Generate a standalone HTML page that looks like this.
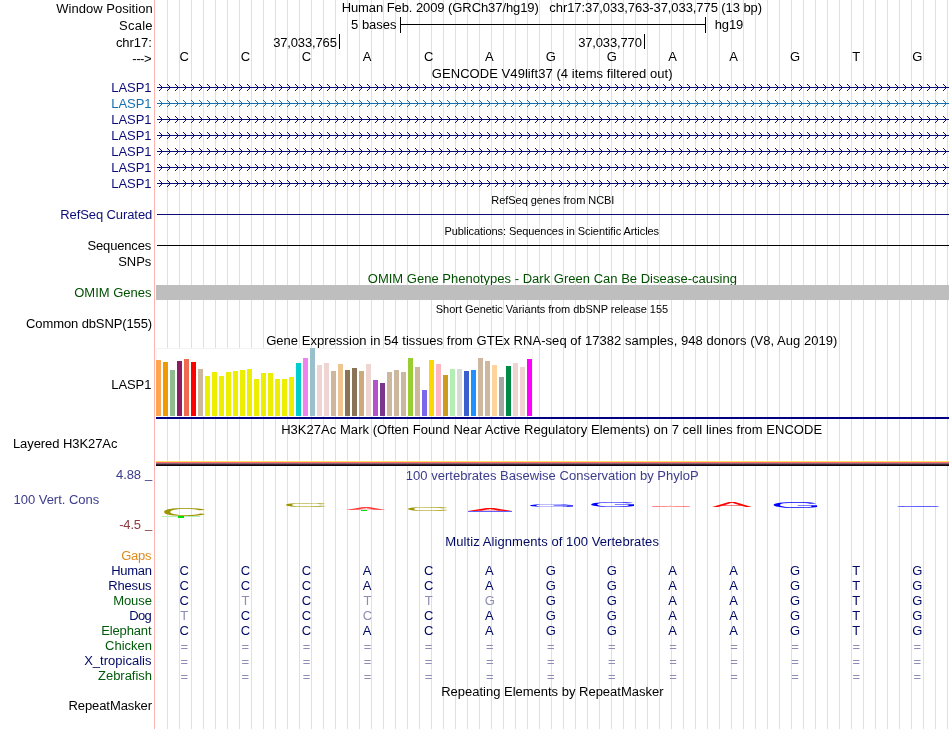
<!DOCTYPE html>
<html><head><meta charset="utf-8"><title>UCSC Genome Browser</title>
<style>
html,body{margin:0;padding:0;background:#fff;}
svg{display:block;will-change:transform;font-family:'Liberation Sans', sans-serif;}
rect{shape-rendering:crispEdges;}
</style></head><body>
<svg width="950" height="729" viewBox="0 0 950 729">
<rect x="0" y="0" width="950" height="729" fill="#fff"/>
<path d="M167.5 0V729M179.5 0V729M191.5 0V729M203.5 0V729M215.5 0V729M227.5 0V729M239.5 0V729M251.5 0V729M263.5 0V729M275.5 0V729M287.5 0V729M299.5 0V729M311.5 0V729M323.5 0V729M335.5 0V729M347.5 0V729M359.5 0V729M371.5 0V729M383.5 0V729M395.5 0V729M407.5 0V729M419.5 0V729M431.5 0V729M443.5 0V729M455.5 0V729M467.5 0V729M479.5 0V729M491.5 0V729M503.5 0V729M515.5 0V729M527.5 0V729M539.5 0V729M551.5 0V729M563.5 0V729M575.5 0V729M587.5 0V729M599.5 0V729M611.5 0V729M623.5 0V729M635.5 0V729M647.5 0V729M659.5 0V729M671.5 0V729M683.5 0V729M695.5 0V729M707.5 0V729M719.5 0V729M731.5 0V729M743.5 0V729M755.5 0V729M767.5 0V729M779.5 0V729M791.5 0V729M803.5 0V729M815.5 0V729M827.5 0V729M839.5 0V729M851.5 0V729M863.5 0V729M875.5 0V729M887.5 0V729M899.5 0V729M911.5 0V729M923.5 0V729M935.5 0V729M947.5 0V729" stroke="#dcdcff" stroke-width="1" fill="none" shape-rendering="crispEdges"/>
<rect x="154" y="0" width="1" height="729" fill="#ffb4b4"/>
<text transform="translate(56.28,13) scale(1,1.04)" fill="#000" font-size="13" letter-spacing="0.023" xml:space="preserve">Window Position</text>
<text transform="translate(118.97,29.6) scale(1,1.04)" fill="#000" font-size="13" letter-spacing="0.276" xml:space="preserve">Scale</text>
<text transform="translate(115.91,46.8) scale(1,1.04)" fill="#000" font-size="13" letter-spacing="-0.052" xml:space="preserve">chr17:</text>
<text transform="translate(132.29,62.6) scale(1,1.04)" fill="#000" font-size="13" letter-spacing="-0.454" xml:space="preserve">---&gt;</text>
<text transform="translate(341.66,12) scale(1,1.04)" fill="#000" font-size="13" letter-spacing="-0.074" xml:space="preserve">Human Feb. 2009 (GRCh37/hg19)   chr17:37,033,763-37,033,775 (13 bp)</text>
<text transform="translate(351.10,29) scale(1,1.04)" fill="#000" font-size="13" letter-spacing="-0.011" xml:space="preserve">5 bases</text>
<rect x="400" y="24" width="306" height="1" fill="#000"/>
<rect x="400" y="17" width="1" height="16" fill="#000"/>
<rect x="705" y="17" width="1" height="16" fill="#000"/>
<text transform="translate(714.80,29) scale(1,1.04)" fill="#000" font-size="13" letter-spacing="-0.153" xml:space="preserve">hg19</text>
<text transform="translate(273.13,47) scale(1,1.04)" fill="#000" font-size="13" letter-spacing="-0.134" xml:space="preserve">37,033,765</text>
<rect x="339" y="34" width="1" height="15" fill="#000"/>
<text transform="translate(578.13,47) scale(1,1.04)" fill="#000" font-size="13" letter-spacing="-0.138" xml:space="preserve">37,033,770</text>
<rect x="644" y="34" width="1" height="15" fill="#000"/>
<text transform="translate(184.30,60.8) scale(1,1.04)" text-anchor="middle" fill="#000" font-size="13">C</text>
<text transform="translate(245.38,60.8) scale(1,1.04)" text-anchor="middle" fill="#000" font-size="13">C</text>
<text transform="translate(306.46,60.8) scale(1,1.04)" text-anchor="middle" fill="#000" font-size="13">C</text>
<text transform="translate(367.14,60.8) scale(1,1.04)" text-anchor="middle" fill="#000" font-size="13">A</text>
<text transform="translate(428.62,60.8) scale(1,1.04)" text-anchor="middle" fill="#000" font-size="13">C</text>
<text transform="translate(489.30,60.8) scale(1,1.04)" text-anchor="middle" fill="#000" font-size="13">A</text>
<text transform="translate(550.78,60.8) scale(1,1.04)" text-anchor="middle" fill="#000" font-size="13">G</text>
<text transform="translate(611.86,60.8) scale(1,1.04)" text-anchor="middle" fill="#000" font-size="13">G</text>
<text transform="translate(672.54,60.8) scale(1,1.04)" text-anchor="middle" fill="#000" font-size="13">A</text>
<text transform="translate(733.62,60.8) scale(1,1.04)" text-anchor="middle" fill="#000" font-size="13">A</text>
<text transform="translate(795.10,60.8) scale(1,1.04)" text-anchor="middle" fill="#000" font-size="13">G</text>
<text transform="translate(856.18,60.8) scale(1,1.04)" text-anchor="middle" fill="#000" font-size="13">T</text>
<text transform="translate(917.26,60.8) scale(1,1.04)" text-anchor="middle" fill="#000" font-size="13">G</text>
<text transform="translate(431.85,78) scale(1,1.04)" fill="#000" font-size="13" letter-spacing="0.062" xml:space="preserve">GENCODE V49lift37 (4 items filtered out)</text>
<text transform="translate(111.36,91.8) scale(1,1.04)" fill="#0c0c78" font-size="13" letter-spacing="-0.093" xml:space="preserve">LASP1</text>
<rect x="157" y="87" width="792" height="1" fill="#0c0c78"/>
<path d="M159 84L162.5 87.5L159 91M167 84L170.5 87.5L167 91M175 84L178.5 87.5L175 91M183 84L186.5 87.5L183 91M191 84L194.5 87.5L191 91M199 84L202.5 87.5L199 91M207 84L210.5 87.5L207 91M215 84L218.5 87.5L215 91M223 84L226.5 87.5L223 91M231 84L234.5 87.5L231 91M239 84L242.5 87.5L239 91M247 84L250.5 87.5L247 91M255 84L258.5 87.5L255 91M263 84L266.5 87.5L263 91M271 84L274.5 87.5L271 91M279 84L282.5 87.5L279 91M287 84L290.5 87.5L287 91M295 84L298.5 87.5L295 91M303 84L306.5 87.5L303 91M311 84L314.5 87.5L311 91M319 84L322.5 87.5L319 91M327 84L330.5 87.5L327 91M335 84L338.5 87.5L335 91M343 84L346.5 87.5L343 91M351 84L354.5 87.5L351 91M359 84L362.5 87.5L359 91M367 84L370.5 87.5L367 91M375 84L378.5 87.5L375 91M383 84L386.5 87.5L383 91M391 84L394.5 87.5L391 91M399 84L402.5 87.5L399 91M407 84L410.5 87.5L407 91M415 84L418.5 87.5L415 91M423 84L426.5 87.5L423 91M431 84L434.5 87.5L431 91M439 84L442.5 87.5L439 91M447 84L450.5 87.5L447 91M455 84L458.5 87.5L455 91M463 84L466.5 87.5L463 91M471 84L474.5 87.5L471 91M479 84L482.5 87.5L479 91M487 84L490.5 87.5L487 91M495 84L498.5 87.5L495 91M503 84L506.5 87.5L503 91M511 84L514.5 87.5L511 91M519 84L522.5 87.5L519 91M527 84L530.5 87.5L527 91M535 84L538.5 87.5L535 91M543 84L546.5 87.5L543 91M551 84L554.5 87.5L551 91M559 84L562.5 87.5L559 91M567 84L570.5 87.5L567 91M575 84L578.5 87.5L575 91M583 84L586.5 87.5L583 91M591 84L594.5 87.5L591 91M599 84L602.5 87.5L599 91M607 84L610.5 87.5L607 91M615 84L618.5 87.5L615 91M623 84L626.5 87.5L623 91M631 84L634.5 87.5L631 91M639 84L642.5 87.5L639 91M647 84L650.5 87.5L647 91M655 84L658.5 87.5L655 91M663 84L666.5 87.5L663 91M671 84L674.5 87.5L671 91M679 84L682.5 87.5L679 91M687 84L690.5 87.5L687 91M695 84L698.5 87.5L695 91M703 84L706.5 87.5L703 91M711 84L714.5 87.5L711 91M719 84L722.5 87.5L719 91M727 84L730.5 87.5L727 91M735 84L738.5 87.5L735 91M743 84L746.5 87.5L743 91M751 84L754.5 87.5L751 91M759 84L762.5 87.5L759 91M767 84L770.5 87.5L767 91M775 84L778.5 87.5L775 91M783 84L786.5 87.5L783 91M791 84L794.5 87.5L791 91M799 84L802.5 87.5L799 91M807 84L810.5 87.5L807 91M815 84L818.5 87.5L815 91M823 84L826.5 87.5L823 91M831 84L834.5 87.5L831 91M839 84L842.5 87.5L839 91M847 84L850.5 87.5L847 91M855 84L858.5 87.5L855 91M863 84L866.5 87.5L863 91M871 84L874.5 87.5L871 91M879 84L882.5 87.5L879 91M887 84L890.5 87.5L887 91M895 84L898.5 87.5L895 91M903 84L906.5 87.5L903 91M911 84L914.5 87.5L911 91M919 84L922.5 87.5L919 91M927 84L930.5 87.5L927 91M935 84L938.5 87.5L935 91M943 84L946.5 87.5L943 91" stroke="#0c0c78" fill="none" stroke-width="1"/>
<text transform="translate(111.36,107.8) scale(1,1.04)" fill="#1670b0" font-size="13" letter-spacing="-0.093" xml:space="preserve">LASP1</text>
<rect x="157" y="103" width="792" height="1" fill="#1670b0"/>
<path d="M159 100L162.5 103.5L159 107M167 100L170.5 103.5L167 107M175 100L178.5 103.5L175 107M183 100L186.5 103.5L183 107M191 100L194.5 103.5L191 107M199 100L202.5 103.5L199 107M207 100L210.5 103.5L207 107M215 100L218.5 103.5L215 107M223 100L226.5 103.5L223 107M231 100L234.5 103.5L231 107M239 100L242.5 103.5L239 107M247 100L250.5 103.5L247 107M255 100L258.5 103.5L255 107M263 100L266.5 103.5L263 107M271 100L274.5 103.5L271 107M279 100L282.5 103.5L279 107M287 100L290.5 103.5L287 107M295 100L298.5 103.5L295 107M303 100L306.5 103.5L303 107M311 100L314.5 103.5L311 107M319 100L322.5 103.5L319 107M327 100L330.5 103.5L327 107M335 100L338.5 103.5L335 107M343 100L346.5 103.5L343 107M351 100L354.5 103.5L351 107M359 100L362.5 103.5L359 107M367 100L370.5 103.5L367 107M375 100L378.5 103.5L375 107M383 100L386.5 103.5L383 107M391 100L394.5 103.5L391 107M399 100L402.5 103.5L399 107M407 100L410.5 103.5L407 107M415 100L418.5 103.5L415 107M423 100L426.5 103.5L423 107M431 100L434.5 103.5L431 107M439 100L442.5 103.5L439 107M447 100L450.5 103.5L447 107M455 100L458.5 103.5L455 107M463 100L466.5 103.5L463 107M471 100L474.5 103.5L471 107M479 100L482.5 103.5L479 107M487 100L490.5 103.5L487 107M495 100L498.5 103.5L495 107M503 100L506.5 103.5L503 107M511 100L514.5 103.5L511 107M519 100L522.5 103.5L519 107M527 100L530.5 103.5L527 107M535 100L538.5 103.5L535 107M543 100L546.5 103.5L543 107M551 100L554.5 103.5L551 107M559 100L562.5 103.5L559 107M567 100L570.5 103.5L567 107M575 100L578.5 103.5L575 107M583 100L586.5 103.5L583 107M591 100L594.5 103.5L591 107M599 100L602.5 103.5L599 107M607 100L610.5 103.5L607 107M615 100L618.5 103.5L615 107M623 100L626.5 103.5L623 107M631 100L634.5 103.5L631 107M639 100L642.5 103.5L639 107M647 100L650.5 103.5L647 107M655 100L658.5 103.5L655 107M663 100L666.5 103.5L663 107M671 100L674.5 103.5L671 107M679 100L682.5 103.5L679 107M687 100L690.5 103.5L687 107M695 100L698.5 103.5L695 107M703 100L706.5 103.5L703 107M711 100L714.5 103.5L711 107M719 100L722.5 103.5L719 107M727 100L730.5 103.5L727 107M735 100L738.5 103.5L735 107M743 100L746.5 103.5L743 107M751 100L754.5 103.5L751 107M759 100L762.5 103.5L759 107M767 100L770.5 103.5L767 107M775 100L778.5 103.5L775 107M783 100L786.5 103.5L783 107M791 100L794.5 103.5L791 107M799 100L802.5 103.5L799 107M807 100L810.5 103.5L807 107M815 100L818.5 103.5L815 107M823 100L826.5 103.5L823 107M831 100L834.5 103.5L831 107M839 100L842.5 103.5L839 107M847 100L850.5 103.5L847 107M855 100L858.5 103.5L855 107M863 100L866.5 103.5L863 107M871 100L874.5 103.5L871 107M879 100L882.5 103.5L879 107M887 100L890.5 103.5L887 107M895 100L898.5 103.5L895 107M903 100L906.5 103.5L903 107M911 100L914.5 103.5L911 107M919 100L922.5 103.5L919 107M927 100L930.5 103.5L927 107M935 100L938.5 103.5L935 107M943 100L946.5 103.5L943 107" stroke="#1670b0" fill="none" stroke-width="1"/>
<text transform="translate(111.36,123.8) scale(1,1.04)" fill="#0c0c78" font-size="13" letter-spacing="-0.093" xml:space="preserve">LASP1</text>
<rect x="157" y="119" width="792" height="1" fill="#0c0c78"/>
<path d="M159 116L162.5 119.5L159 123M167 116L170.5 119.5L167 123M175 116L178.5 119.5L175 123M183 116L186.5 119.5L183 123M191 116L194.5 119.5L191 123M199 116L202.5 119.5L199 123M207 116L210.5 119.5L207 123M215 116L218.5 119.5L215 123M223 116L226.5 119.5L223 123M231 116L234.5 119.5L231 123M239 116L242.5 119.5L239 123M247 116L250.5 119.5L247 123M255 116L258.5 119.5L255 123M263 116L266.5 119.5L263 123M271 116L274.5 119.5L271 123M279 116L282.5 119.5L279 123M287 116L290.5 119.5L287 123M295 116L298.5 119.5L295 123M303 116L306.5 119.5L303 123M311 116L314.5 119.5L311 123M319 116L322.5 119.5L319 123M327 116L330.5 119.5L327 123M335 116L338.5 119.5L335 123M343 116L346.5 119.5L343 123M351 116L354.5 119.5L351 123M359 116L362.5 119.5L359 123M367 116L370.5 119.5L367 123M375 116L378.5 119.5L375 123M383 116L386.5 119.5L383 123M391 116L394.5 119.5L391 123M399 116L402.5 119.5L399 123M407 116L410.5 119.5L407 123M415 116L418.5 119.5L415 123M423 116L426.5 119.5L423 123M431 116L434.5 119.5L431 123M439 116L442.5 119.5L439 123M447 116L450.5 119.5L447 123M455 116L458.5 119.5L455 123M463 116L466.5 119.5L463 123M471 116L474.5 119.5L471 123M479 116L482.5 119.5L479 123M487 116L490.5 119.5L487 123M495 116L498.5 119.5L495 123M503 116L506.5 119.5L503 123M511 116L514.5 119.5L511 123M519 116L522.5 119.5L519 123M527 116L530.5 119.5L527 123M535 116L538.5 119.5L535 123M543 116L546.5 119.5L543 123M551 116L554.5 119.5L551 123M559 116L562.5 119.5L559 123M567 116L570.5 119.5L567 123M575 116L578.5 119.5L575 123M583 116L586.5 119.5L583 123M591 116L594.5 119.5L591 123M599 116L602.5 119.5L599 123M607 116L610.5 119.5L607 123M615 116L618.5 119.5L615 123M623 116L626.5 119.5L623 123M631 116L634.5 119.5L631 123M639 116L642.5 119.5L639 123M647 116L650.5 119.5L647 123M655 116L658.5 119.5L655 123M663 116L666.5 119.5L663 123M671 116L674.5 119.5L671 123M679 116L682.5 119.5L679 123M687 116L690.5 119.5L687 123M695 116L698.5 119.5L695 123M703 116L706.5 119.5L703 123M711 116L714.5 119.5L711 123M719 116L722.5 119.5L719 123M727 116L730.5 119.5L727 123M735 116L738.5 119.5L735 123M743 116L746.5 119.5L743 123M751 116L754.5 119.5L751 123M759 116L762.5 119.5L759 123M767 116L770.5 119.5L767 123M775 116L778.5 119.5L775 123M783 116L786.5 119.5L783 123M791 116L794.5 119.5L791 123M799 116L802.5 119.5L799 123M807 116L810.5 119.5L807 123M815 116L818.5 119.5L815 123M823 116L826.5 119.5L823 123M831 116L834.5 119.5L831 123M839 116L842.5 119.5L839 123M847 116L850.5 119.5L847 123M855 116L858.5 119.5L855 123M863 116L866.5 119.5L863 123M871 116L874.5 119.5L871 123M879 116L882.5 119.5L879 123M887 116L890.5 119.5L887 123M895 116L898.5 119.5L895 123M903 116L906.5 119.5L903 123M911 116L914.5 119.5L911 123M919 116L922.5 119.5L919 123M927 116L930.5 119.5L927 123M935 116L938.5 119.5L935 123M943 116L946.5 119.5L943 123" stroke="#0c0c78" fill="none" stroke-width="1"/>
<text transform="translate(111.36,139.8) scale(1,1.04)" fill="#0c0c78" font-size="13" letter-spacing="-0.093" xml:space="preserve">LASP1</text>
<rect x="157" y="135" width="792" height="1" fill="#0c0c78"/>
<path d="M159 132L162.5 135.5L159 139M167 132L170.5 135.5L167 139M175 132L178.5 135.5L175 139M183 132L186.5 135.5L183 139M191 132L194.5 135.5L191 139M199 132L202.5 135.5L199 139M207 132L210.5 135.5L207 139M215 132L218.5 135.5L215 139M223 132L226.5 135.5L223 139M231 132L234.5 135.5L231 139M239 132L242.5 135.5L239 139M247 132L250.5 135.5L247 139M255 132L258.5 135.5L255 139M263 132L266.5 135.5L263 139M271 132L274.5 135.5L271 139M279 132L282.5 135.5L279 139M287 132L290.5 135.5L287 139M295 132L298.5 135.5L295 139M303 132L306.5 135.5L303 139M311 132L314.5 135.5L311 139M319 132L322.5 135.5L319 139M327 132L330.5 135.5L327 139M335 132L338.5 135.5L335 139M343 132L346.5 135.5L343 139M351 132L354.5 135.5L351 139M359 132L362.5 135.5L359 139M367 132L370.5 135.5L367 139M375 132L378.5 135.5L375 139M383 132L386.5 135.5L383 139M391 132L394.5 135.5L391 139M399 132L402.5 135.5L399 139M407 132L410.5 135.5L407 139M415 132L418.5 135.5L415 139M423 132L426.5 135.5L423 139M431 132L434.5 135.5L431 139M439 132L442.5 135.5L439 139M447 132L450.5 135.5L447 139M455 132L458.5 135.5L455 139M463 132L466.5 135.5L463 139M471 132L474.5 135.5L471 139M479 132L482.5 135.5L479 139M487 132L490.5 135.5L487 139M495 132L498.5 135.5L495 139M503 132L506.5 135.5L503 139M511 132L514.5 135.5L511 139M519 132L522.5 135.5L519 139M527 132L530.5 135.5L527 139M535 132L538.5 135.5L535 139M543 132L546.5 135.5L543 139M551 132L554.5 135.5L551 139M559 132L562.5 135.5L559 139M567 132L570.5 135.5L567 139M575 132L578.5 135.5L575 139M583 132L586.5 135.5L583 139M591 132L594.5 135.5L591 139M599 132L602.5 135.5L599 139M607 132L610.5 135.5L607 139M615 132L618.5 135.5L615 139M623 132L626.5 135.5L623 139M631 132L634.5 135.5L631 139M639 132L642.5 135.5L639 139M647 132L650.5 135.5L647 139M655 132L658.5 135.5L655 139M663 132L666.5 135.5L663 139M671 132L674.5 135.5L671 139M679 132L682.5 135.5L679 139M687 132L690.5 135.5L687 139M695 132L698.5 135.5L695 139M703 132L706.5 135.5L703 139M711 132L714.5 135.5L711 139M719 132L722.5 135.5L719 139M727 132L730.5 135.5L727 139M735 132L738.5 135.5L735 139M743 132L746.5 135.5L743 139M751 132L754.5 135.5L751 139M759 132L762.5 135.5L759 139M767 132L770.5 135.5L767 139M775 132L778.5 135.5L775 139M783 132L786.5 135.5L783 139M791 132L794.5 135.5L791 139M799 132L802.5 135.5L799 139M807 132L810.5 135.5L807 139M815 132L818.5 135.5L815 139M823 132L826.5 135.5L823 139M831 132L834.5 135.5L831 139M839 132L842.5 135.5L839 139M847 132L850.5 135.5L847 139M855 132L858.5 135.5L855 139M863 132L866.5 135.5L863 139M871 132L874.5 135.5L871 139M879 132L882.5 135.5L879 139M887 132L890.5 135.5L887 139M895 132L898.5 135.5L895 139M903 132L906.5 135.5L903 139M911 132L914.5 135.5L911 139M919 132L922.5 135.5L919 139M927 132L930.5 135.5L927 139M935 132L938.5 135.5L935 139M943 132L946.5 135.5L943 139" stroke="#0c0c78" fill="none" stroke-width="1"/>
<text transform="translate(111.36,155.8) scale(1,1.04)" fill="#0c0c78" font-size="13" letter-spacing="-0.093" xml:space="preserve">LASP1</text>
<rect x="157" y="151" width="792" height="1" fill="#0c0c78"/>
<path d="M159 148L162.5 151.5L159 155M167 148L170.5 151.5L167 155M175 148L178.5 151.5L175 155M183 148L186.5 151.5L183 155M191 148L194.5 151.5L191 155M199 148L202.5 151.5L199 155M207 148L210.5 151.5L207 155M215 148L218.5 151.5L215 155M223 148L226.5 151.5L223 155M231 148L234.5 151.5L231 155M239 148L242.5 151.5L239 155M247 148L250.5 151.5L247 155M255 148L258.5 151.5L255 155M263 148L266.5 151.5L263 155M271 148L274.5 151.5L271 155M279 148L282.5 151.5L279 155M287 148L290.5 151.5L287 155M295 148L298.5 151.5L295 155M303 148L306.5 151.5L303 155M311 148L314.5 151.5L311 155M319 148L322.5 151.5L319 155M327 148L330.5 151.5L327 155M335 148L338.5 151.5L335 155M343 148L346.5 151.5L343 155M351 148L354.5 151.5L351 155M359 148L362.5 151.5L359 155M367 148L370.5 151.5L367 155M375 148L378.5 151.5L375 155M383 148L386.5 151.5L383 155M391 148L394.5 151.5L391 155M399 148L402.5 151.5L399 155M407 148L410.5 151.5L407 155M415 148L418.5 151.5L415 155M423 148L426.5 151.5L423 155M431 148L434.5 151.5L431 155M439 148L442.5 151.5L439 155M447 148L450.5 151.5L447 155M455 148L458.5 151.5L455 155M463 148L466.5 151.5L463 155M471 148L474.5 151.5L471 155M479 148L482.5 151.5L479 155M487 148L490.5 151.5L487 155M495 148L498.5 151.5L495 155M503 148L506.5 151.5L503 155M511 148L514.5 151.5L511 155M519 148L522.5 151.5L519 155M527 148L530.5 151.5L527 155M535 148L538.5 151.5L535 155M543 148L546.5 151.5L543 155M551 148L554.5 151.5L551 155M559 148L562.5 151.5L559 155M567 148L570.5 151.5L567 155M575 148L578.5 151.5L575 155M583 148L586.5 151.5L583 155M591 148L594.5 151.5L591 155M599 148L602.5 151.5L599 155M607 148L610.5 151.5L607 155M615 148L618.5 151.5L615 155M623 148L626.5 151.5L623 155M631 148L634.5 151.5L631 155M639 148L642.5 151.5L639 155M647 148L650.5 151.5L647 155M655 148L658.5 151.5L655 155M663 148L666.5 151.5L663 155M671 148L674.5 151.5L671 155M679 148L682.5 151.5L679 155M687 148L690.5 151.5L687 155M695 148L698.5 151.5L695 155M703 148L706.5 151.5L703 155M711 148L714.5 151.5L711 155M719 148L722.5 151.5L719 155M727 148L730.5 151.5L727 155M735 148L738.5 151.5L735 155M743 148L746.5 151.5L743 155M751 148L754.5 151.5L751 155M759 148L762.5 151.5L759 155M767 148L770.5 151.5L767 155M775 148L778.5 151.5L775 155M783 148L786.5 151.5L783 155M791 148L794.5 151.5L791 155M799 148L802.5 151.5L799 155M807 148L810.5 151.5L807 155M815 148L818.5 151.5L815 155M823 148L826.5 151.5L823 155M831 148L834.5 151.5L831 155M839 148L842.5 151.5L839 155M847 148L850.5 151.5L847 155M855 148L858.5 151.5L855 155M863 148L866.5 151.5L863 155M871 148L874.5 151.5L871 155M879 148L882.5 151.5L879 155M887 148L890.5 151.5L887 155M895 148L898.5 151.5L895 155M903 148L906.5 151.5L903 155M911 148L914.5 151.5L911 155M919 148L922.5 151.5L919 155M927 148L930.5 151.5L927 155M935 148L938.5 151.5L935 155M943 148L946.5 151.5L943 155" stroke="#0c0c78" fill="none" stroke-width="1"/>
<text transform="translate(111.36,171.8) scale(1,1.04)" fill="#0c0c78" font-size="13" letter-spacing="-0.093" xml:space="preserve">LASP1</text>
<rect x="157" y="167" width="792" height="1" fill="#0c0c78"/>
<path d="M159 164L162.5 167.5L159 171M167 164L170.5 167.5L167 171M175 164L178.5 167.5L175 171M183 164L186.5 167.5L183 171M191 164L194.5 167.5L191 171M199 164L202.5 167.5L199 171M207 164L210.5 167.5L207 171M215 164L218.5 167.5L215 171M223 164L226.5 167.5L223 171M231 164L234.5 167.5L231 171M239 164L242.5 167.5L239 171M247 164L250.5 167.5L247 171M255 164L258.5 167.5L255 171M263 164L266.5 167.5L263 171M271 164L274.5 167.5L271 171M279 164L282.5 167.5L279 171M287 164L290.5 167.5L287 171M295 164L298.5 167.5L295 171M303 164L306.5 167.5L303 171M311 164L314.5 167.5L311 171M319 164L322.5 167.5L319 171M327 164L330.5 167.5L327 171M335 164L338.5 167.5L335 171M343 164L346.5 167.5L343 171M351 164L354.5 167.5L351 171M359 164L362.5 167.5L359 171M367 164L370.5 167.5L367 171M375 164L378.5 167.5L375 171M383 164L386.5 167.5L383 171M391 164L394.5 167.5L391 171M399 164L402.5 167.5L399 171M407 164L410.5 167.5L407 171M415 164L418.5 167.5L415 171M423 164L426.5 167.5L423 171M431 164L434.5 167.5L431 171M439 164L442.5 167.5L439 171M447 164L450.5 167.5L447 171M455 164L458.5 167.5L455 171M463 164L466.5 167.5L463 171M471 164L474.5 167.5L471 171M479 164L482.5 167.5L479 171M487 164L490.5 167.5L487 171M495 164L498.5 167.5L495 171M503 164L506.5 167.5L503 171M511 164L514.5 167.5L511 171M519 164L522.5 167.5L519 171M527 164L530.5 167.5L527 171M535 164L538.5 167.5L535 171M543 164L546.5 167.5L543 171M551 164L554.5 167.5L551 171M559 164L562.5 167.5L559 171M567 164L570.5 167.5L567 171M575 164L578.5 167.5L575 171M583 164L586.5 167.5L583 171M591 164L594.5 167.5L591 171M599 164L602.5 167.5L599 171M607 164L610.5 167.5L607 171M615 164L618.5 167.5L615 171M623 164L626.5 167.5L623 171M631 164L634.5 167.5L631 171M639 164L642.5 167.5L639 171M647 164L650.5 167.5L647 171M655 164L658.5 167.5L655 171M663 164L666.5 167.5L663 171M671 164L674.5 167.5L671 171M679 164L682.5 167.5L679 171M687 164L690.5 167.5L687 171M695 164L698.5 167.5L695 171M703 164L706.5 167.5L703 171M711 164L714.5 167.5L711 171M719 164L722.5 167.5L719 171M727 164L730.5 167.5L727 171M735 164L738.5 167.5L735 171M743 164L746.5 167.5L743 171M751 164L754.5 167.5L751 171M759 164L762.5 167.5L759 171M767 164L770.5 167.5L767 171M775 164L778.5 167.5L775 171M783 164L786.5 167.5L783 171M791 164L794.5 167.5L791 171M799 164L802.5 167.5L799 171M807 164L810.5 167.5L807 171M815 164L818.5 167.5L815 171M823 164L826.5 167.5L823 171M831 164L834.5 167.5L831 171M839 164L842.5 167.5L839 171M847 164L850.5 167.5L847 171M855 164L858.5 167.5L855 171M863 164L866.5 167.5L863 171M871 164L874.5 167.5L871 171M879 164L882.5 167.5L879 171M887 164L890.5 167.5L887 171M895 164L898.5 167.5L895 171M903 164L906.5 167.5L903 171M911 164L914.5 167.5L911 171M919 164L922.5 167.5L919 171M927 164L930.5 167.5L927 171M935 164L938.5 167.5L935 171M943 164L946.5 167.5L943 171" stroke="#0c0c78" fill="none" stroke-width="1"/>
<text transform="translate(111.36,187.8) scale(1,1.04)" fill="#0c0c78" font-size="13" letter-spacing="-0.093" xml:space="preserve">LASP1</text>
<rect x="157" y="183" width="792" height="1" fill="#0c0c78"/>
<path d="M159 180L162.5 183.5L159 187M167 180L170.5 183.5L167 187M175 180L178.5 183.5L175 187M183 180L186.5 183.5L183 187M191 180L194.5 183.5L191 187M199 180L202.5 183.5L199 187M207 180L210.5 183.5L207 187M215 180L218.5 183.5L215 187M223 180L226.5 183.5L223 187M231 180L234.5 183.5L231 187M239 180L242.5 183.5L239 187M247 180L250.5 183.5L247 187M255 180L258.5 183.5L255 187M263 180L266.5 183.5L263 187M271 180L274.5 183.5L271 187M279 180L282.5 183.5L279 187M287 180L290.5 183.5L287 187M295 180L298.5 183.5L295 187M303 180L306.5 183.5L303 187M311 180L314.5 183.5L311 187M319 180L322.5 183.5L319 187M327 180L330.5 183.5L327 187M335 180L338.5 183.5L335 187M343 180L346.5 183.5L343 187M351 180L354.5 183.5L351 187M359 180L362.5 183.5L359 187M367 180L370.5 183.5L367 187M375 180L378.5 183.5L375 187M383 180L386.5 183.5L383 187M391 180L394.5 183.5L391 187M399 180L402.5 183.5L399 187M407 180L410.5 183.5L407 187M415 180L418.5 183.5L415 187M423 180L426.5 183.5L423 187M431 180L434.5 183.5L431 187M439 180L442.5 183.5L439 187M447 180L450.5 183.5L447 187M455 180L458.5 183.5L455 187M463 180L466.5 183.5L463 187M471 180L474.5 183.5L471 187M479 180L482.5 183.5L479 187M487 180L490.5 183.5L487 187M495 180L498.5 183.5L495 187M503 180L506.5 183.5L503 187M511 180L514.5 183.5L511 187M519 180L522.5 183.5L519 187M527 180L530.5 183.5L527 187M535 180L538.5 183.5L535 187M543 180L546.5 183.5L543 187M551 180L554.5 183.5L551 187M559 180L562.5 183.5L559 187M567 180L570.5 183.5L567 187M575 180L578.5 183.5L575 187M583 180L586.5 183.5L583 187M591 180L594.5 183.5L591 187M599 180L602.5 183.5L599 187M607 180L610.5 183.5L607 187M615 180L618.5 183.5L615 187M623 180L626.5 183.5L623 187M631 180L634.5 183.5L631 187M639 180L642.5 183.5L639 187M647 180L650.5 183.5L647 187M655 180L658.5 183.5L655 187M663 180L666.5 183.5L663 187M671 180L674.5 183.5L671 187M679 180L682.5 183.5L679 187M687 180L690.5 183.5L687 187M695 180L698.5 183.5L695 187M703 180L706.5 183.5L703 187M711 180L714.5 183.5L711 187M719 180L722.5 183.5L719 187M727 180L730.5 183.5L727 187M735 180L738.5 183.5L735 187M743 180L746.5 183.5L743 187M751 180L754.5 183.5L751 187M759 180L762.5 183.5L759 187M767 180L770.5 183.5L767 187M775 180L778.5 183.5L775 187M783 180L786.5 183.5L783 187M791 180L794.5 183.5L791 187M799 180L802.5 183.5L799 187M807 180L810.5 183.5L807 187M815 180L818.5 183.5L815 187M823 180L826.5 183.5L823 187M831 180L834.5 183.5L831 187M839 180L842.5 183.5L839 187M847 180L850.5 183.5L847 187M855 180L858.5 183.5L855 187M863 180L866.5 183.5L863 187M871 180L874.5 183.5L871 187M879 180L882.5 183.5L879 187M887 180L890.5 183.5L887 187M895 180L898.5 183.5L895 187M903 180L906.5 183.5L903 187M911 180L914.5 183.5L911 187M919 180L922.5 183.5L919 187M927 180L930.5 183.5L927 187M935 180L938.5 183.5L935 187M943 180L946.5 183.5L943 187" stroke="#0c0c78" fill="none" stroke-width="1"/>
<text transform="translate(491.30,203.8) scale(1,1.04)" fill="#000" font-size="11" letter-spacing="-0.047" xml:space="preserve">RefSeq genes from NCBI</text>
<text transform="translate(60.26,218.6) scale(1,1.04)" fill="#0c0c78" font-size="13" letter-spacing="-0.088" xml:space="preserve">RefSeq Curated</text>
<rect x="157" y="214" width="792" height="1" fill="#0c0c78"/>
<text transform="translate(444.40,235) scale(1,1.04)" fill="#000" font-size="11" letter-spacing="-0.065" xml:space="preserve">Publications: Sequences in Scientific Articles</text>
<text transform="translate(87.47,249.6) scale(1,1.04)" fill="#000" font-size="13" letter-spacing="-0.150" xml:space="preserve">Sequences</text>
<rect x="157" y="245" width="792" height="1" fill="#000"/>
<text transform="translate(118.17,265.6) scale(1,1.04)" fill="#000" font-size="13" letter-spacing="-0.005" xml:space="preserve">SNPs</text>
<text transform="translate(367.77,282.6) scale(1,1.04)" fill="#005000" font-size="13" letter-spacing="0.019" xml:space="preserve">OMIM Gene Phenotypes - Dark Green Can Be Disease-causing</text>
<text transform="translate(74.27,296.6) scale(1,1.04)" fill="#005000" font-size="13" letter-spacing="-0.013" xml:space="preserve">OMIM Genes</text>
<rect x="156" y="285" width="793" height="15" fill="#bebebe"/>
<text transform="translate(435.79,313) scale(1,1.04)" fill="#000" font-size="11" letter-spacing="-0.016" xml:space="preserve">Short Genetic Variants from dbSNP release 155</text>
<text transform="translate(26.05,327.6) scale(1,1.04)" fill="#000" font-size="13" letter-spacing="-0.102" xml:space="preserve">Common dbSNP(155)</text>
<text transform="translate(266.15,344.6) scale(1,1.04)" fill="#000" font-size="13" letter-spacing="0.051" xml:space="preserve">Gene Expression in 54 tissues from GTEx RNA-seq of 17382 samples, 948 donors (V8, Aug 2019)</text>
<rect x="156" y="348" width="377" height="68" fill="#fff"/>
<rect x="156" y="348" width="377" height="1" fill="#f3f3f3"/>
<rect x="156" y="348" width="1" height="68" fill="#f3f3f3"/>
<rect x="532" y="348" width="1" height="68" fill="#f3f3f3"/>
<rect x="156" y="360" width="5" height="56" fill="#FFA54F"/>
<rect x="163" y="362" width="5" height="54" fill="#EE9A00"/>
<rect x="170" y="370" width="5" height="46" fill="#8FBC8F"/>
<rect x="177" y="361" width="5" height="55" fill="#8B1C62"/>
<rect x="184" y="359" width="5" height="57" fill="#EE6A50"/>
<rect x="191" y="362" width="5" height="54" fill="#FF0000"/>
<rect x="198" y="369" width="5" height="47" fill="#CDB79E"/>
<rect x="205" y="376" width="5" height="40" fill="#EEEE00"/>
<rect x="212" y="372" width="5" height="44" fill="#EEEE00"/>
<rect x="219" y="376" width="5" height="40" fill="#EEEE00"/>
<rect x="226" y="372" width="5" height="44" fill="#EEEE00"/>
<rect x="233" y="371" width="5" height="45" fill="#EEEE00"/>
<rect x="240" y="370" width="5" height="46" fill="#EEEE00"/>
<rect x="247" y="369" width="5" height="47" fill="#EEEE00"/>
<rect x="254" y="379" width="5" height="37" fill="#EEEE00"/>
<rect x="261" y="373" width="5" height="43" fill="#EEEE00"/>
<rect x="268" y="373" width="5" height="43" fill="#EEEE00"/>
<rect x="275" y="379" width="5" height="37" fill="#EEEE00"/>
<rect x="282" y="379" width="5" height="37" fill="#EEEE00"/>
<rect x="289" y="377" width="5" height="39" fill="#EEEE00"/>
<rect x="296" y="363" width="5" height="53" fill="#00CDCD"/>
<rect x="303" y="358" width="5" height="58" fill="#EE82EE"/>
<rect x="310" y="348" width="5" height="68" fill="#9AC0CD"/>
<rect x="317" y="365" width="5" height="51" fill="#EED5D2"/>
<rect x="324" y="363" width="5" height="53" fill="#EED5D2"/>
<rect x="331" y="371" width="5" height="45" fill="#CDB79E"/>
<rect x="338" y="364" width="5" height="52" fill="#EEC591"/>
<rect x="345" y="370" width="5" height="46" fill="#8B7355"/>
<rect x="352" y="368" width="5" height="48" fill="#8B7355"/>
<rect x="359" y="371" width="5" height="45" fill="#CDAA7D"/>
<rect x="366" y="364" width="5" height="52" fill="#EED5D2"/>
<rect x="373" y="380" width="5" height="36" fill="#B452CD"/>
<rect x="380" y="383" width="5" height="33" fill="#7A378B"/>
<rect x="387" y="372" width="5" height="44" fill="#CDB79E"/>
<rect x="394" y="370" width="5" height="46" fill="#CDB79E"/>
<rect x="401" y="372" width="5" height="44" fill="#CDB79E"/>
<rect x="408" y="358" width="5" height="58" fill="#9ACD32"/>
<rect x="415" y="367" width="5" height="49" fill="#CDB79E"/>
<rect x="422" y="390" width="5" height="26" fill="#7A67EE"/>
<rect x="429" y="360" width="5" height="56" fill="#FFD700"/>
<rect x="436" y="364" width="5" height="52" fill="#FFB6C1"/>
<rect x="443" y="375" width="5" height="41" fill="#CD9B1D"/>
<rect x="450" y="369" width="5" height="47" fill="#B4EEB4"/>
<rect x="457" y="369" width="5" height="47" fill="#D9D9D9"/>
<rect x="464" y="371" width="5" height="45" fill="#3A5FCD"/>
<rect x="471" y="370" width="5" height="46" fill="#1E90FF"/>
<rect x="478" y="358" width="5" height="58" fill="#CDB79E"/>
<rect x="485" y="361" width="5" height="55" fill="#CDB79E"/>
<rect x="492" y="365" width="5" height="51" fill="#FFD39B"/>
<rect x="499" y="377" width="5" height="39" fill="#A6A6A6"/>
<rect x="506" y="366" width="5" height="50" fill="#008B45"/>
<rect x="513" y="363" width="5" height="53" fill="#EED5D2"/>
<rect x="520" y="367" width="5" height="49" fill="#EED5D2"/>
<rect x="527" y="359" width="5" height="57" fill="#FF00FF"/>
<text transform="translate(111.26,388.8) scale(1,1.04)" fill="#000" font-size="13" letter-spacing="-0.068" xml:space="preserve">LASP1</text>
<rect x="156" y="417" width="793" height="2" fill="#000080"/>
<text transform="translate(281.16,433.6) scale(1,1.04)" fill="#000" font-size="13" letter-spacing="0.046" xml:space="preserve">H3K27Ac Mark (Often Found Near Active Regulatory Elements) on 7 cell lines from ENCODE</text>
<text transform="translate(12.96,447.7) scale(1,1.04)" fill="#000" font-size="13" letter-spacing="-0.065" xml:space="preserve">Layered H3K27Ac</text>
<rect x="156" y="461" width="793" height="1" fill="#ffd966"/>
<rect x="156" y="462" width="793" height="1" fill="#ff6a6a"/>
<rect x="156" y="463" width="793" height="1" fill="#806878"/>
<rect x="156" y="464" width="793" height="1" fill="#3a2426"/>
<rect x="156" y="465" width="793" height="1" fill="#100018"/>
<text transform="translate(405.80,480) scale(1,1.04)" fill="#3c3c8c" font-size="13" letter-spacing="0.026" xml:space="preserve">100 vertebrates Basewise Conservation by PhyloP</text>
<text transform="translate(116.04,479) scale(1,1.04)" fill="#3c3c8c" font-size="13" letter-spacing="-0.082" xml:space="preserve">4.88</text>
<text transform="translate(145.08,477.8) scale(1,1.04)" fill="#3c3c8c" font-size="13" xml:space="preserve">_</text>
<text transform="translate(13.50,503.7) scale(1,1.04)" fill="#3c3c8c" font-size="13" letter-spacing="-0.017" xml:space="preserve">100 Vert. Cons</text>
<text transform="translate(119.19,529) scale(1,1.04)" fill="#8c3c3c" font-size="13" letter-spacing="-0.170" xml:space="preserve">-4.5</text>
<text transform="translate(145.08,527.8) scale(1,1.04)" fill="#8c3c3c" font-size="13" xml:space="preserve">_</text>
<text transform="translate(160.69,515.69) scale(0.6521,0.1172)" font-size="100" fill="#9c9600" opacity="1">C</text>
<text transform="translate(282.79,507.15) scale(0.6316,0.0494)" font-size="100" fill="#9c9600" opacity="1">C</text>
<text transform="translate(345.88,510.00) scale(0.5957,0.0291)" font-size="100" fill="#ff0000" opacity="0.75">A</text>
<text transform="translate(404.79,511.15) scale(0.6316,0.0508)" font-size="100" fill="#9c9600" opacity="1">C</text>
<text transform="translate(467.87,511.40) scale(0.6636,0.0422)" font-size="100" fill="#ff0000" opacity="1">A</text>
<text transform="translate(526.69,506.97) scale(0.6587,0.0282)" font-size="100" fill="#0000ff" opacity="1">G</text>
<text transform="translate(587.69,507.13) scale(0.6587,0.0678)" font-size="100" fill="#0000ff" opacity="1">G</text>
<rect x="652" y="506" width="38" height="1" fill="#ffa8a8"/>
<text transform="translate(650.88,506.80) scale(0.5957,0.0218)" font-size="100" fill="#ff0000" opacity="0.8">A</text>
<text transform="translate(711.88,507.30) scale(0.5972,0.0712)" font-size="100" fill="#ff0000" opacity="1">A</text>
<text transform="translate(770.15,507.52) scale(0.6663,0.0847)" font-size="100" fill="#0000ff" opacity="1">G</text>
<rect x="898" y="506" width="40" height="1" fill="#9c9cff"/>
<text transform="translate(893.76,506.78) scale(0.6434,0.0212)" font-size="100" fill="#0000ff" opacity="0.8">G</text>
<rect x="162" y="516" width="38" height="1" fill="#b4f0b4"/>
<rect x="178" y="516" width="6" height="2" fill="#00e000"/>
<rect x="361" y="510" width="6" height="1" fill="#00e000"/>
<rect x="468" y="511" width="44" height="1" fill="#6060ff"/>
<text transform="translate(445.36,546) scale(1,1.04)" fill="#000a64" font-size="13" letter-spacing="0.078" xml:space="preserve">Multiz Alignments of 100 Vertebrates</text>
<text transform="translate(121.15,560) scale(1,1.04)" fill="#de8a1a" font-size="13" letter-spacing="-0.224" xml:space="preserve">Gaps</text>
<text transform="translate(111.26,575) scale(1,1.04)" fill="#000a64" font-size="13" letter-spacing="-0.290" xml:space="preserve">Human</text>
<text transform="translate(184.30,575) scale(1,1.04)" text-anchor="middle" fill="#000a64" font-size="13">C</text>
<text transform="translate(245.38,575) scale(1,1.04)" text-anchor="middle" fill="#000a64" font-size="13">C</text>
<text transform="translate(306.46,575) scale(1,1.04)" text-anchor="middle" fill="#000a64" font-size="13">C</text>
<text transform="translate(367.14,575) scale(1,1.04)" text-anchor="middle" fill="#000a64" font-size="13">A</text>
<text transform="translate(428.62,575) scale(1,1.04)" text-anchor="middle" fill="#000a64" font-size="13">C</text>
<text transform="translate(489.30,575) scale(1,1.04)" text-anchor="middle" fill="#000a64" font-size="13">A</text>
<text transform="translate(550.78,575) scale(1,1.04)" text-anchor="middle" fill="#000a64" font-size="13">G</text>
<text transform="translate(611.86,575) scale(1,1.04)" text-anchor="middle" fill="#000a64" font-size="13">G</text>
<text transform="translate(672.54,575) scale(1,1.04)" text-anchor="middle" fill="#000a64" font-size="13">A</text>
<text transform="translate(733.62,575) scale(1,1.04)" text-anchor="middle" fill="#000a64" font-size="13">A</text>
<text transform="translate(795.10,575) scale(1,1.04)" text-anchor="middle" fill="#000a64" font-size="13">G</text>
<text transform="translate(856.18,575) scale(1,1.04)" text-anchor="middle" fill="#000a64" font-size="13">T</text>
<text transform="translate(917.26,575) scale(1,1.04)" text-anchor="middle" fill="#000a64" font-size="13">G</text>
<text transform="translate(108.16,590) scale(1,1.04)" fill="#000a64" font-size="13" letter-spacing="-0.136" xml:space="preserve">Rhesus</text>
<text transform="translate(184.30,590) scale(1,1.04)" text-anchor="middle" fill="#000a64" font-size="13">C</text>
<text transform="translate(245.38,590) scale(1,1.04)" text-anchor="middle" fill="#000a64" font-size="13">C</text>
<text transform="translate(306.46,590) scale(1,1.04)" text-anchor="middle" fill="#000a64" font-size="13">C</text>
<text transform="translate(367.14,590) scale(1,1.04)" text-anchor="middle" fill="#000a64" font-size="13">A</text>
<text transform="translate(428.62,590) scale(1,1.04)" text-anchor="middle" fill="#000a64" font-size="13">C</text>
<text transform="translate(489.30,590) scale(1,1.04)" text-anchor="middle" fill="#000a64" font-size="13">A</text>
<text transform="translate(550.78,590) scale(1,1.04)" text-anchor="middle" fill="#000a64" font-size="13">G</text>
<text transform="translate(611.86,590) scale(1,1.04)" text-anchor="middle" fill="#000a64" font-size="13">G</text>
<text transform="translate(672.54,590) scale(1,1.04)" text-anchor="middle" fill="#000a64" font-size="13">A</text>
<text transform="translate(733.62,590) scale(1,1.04)" text-anchor="middle" fill="#000a64" font-size="13">A</text>
<text transform="translate(795.10,590) scale(1,1.04)" text-anchor="middle" fill="#000a64" font-size="13">G</text>
<text transform="translate(856.18,590) scale(1,1.04)" text-anchor="middle" fill="#000a64" font-size="13">T</text>
<text transform="translate(917.26,590) scale(1,1.04)" text-anchor="middle" fill="#000a64" font-size="13">G</text>
<text transform="translate(113.16,605) scale(1,1.04)" fill="#005a0a" font-size="13" letter-spacing="-0.060" xml:space="preserve">Mouse</text>
<text transform="translate(184.30,605) scale(1,1.04)" text-anchor="middle" fill="#000a64" font-size="13">C</text>
<text transform="translate(245.38,605) scale(1,1.04)" text-anchor="middle" fill="#8c8cb4" font-size="13">T</text>
<text transform="translate(306.46,605) scale(1,1.04)" text-anchor="middle" fill="#000a64" font-size="13">C</text>
<text transform="translate(367.54,605) scale(1,1.04)" text-anchor="middle" fill="#8c8cb4" font-size="13">T</text>
<text transform="translate(428.62,605) scale(1,1.04)" text-anchor="middle" fill="#8c8cb4" font-size="13">T</text>
<text transform="translate(489.70,605) scale(1,1.04)" text-anchor="middle" fill="#8c8cb4" font-size="13">G</text>
<text transform="translate(550.78,605) scale(1,1.04)" text-anchor="middle" fill="#000a64" font-size="13">G</text>
<text transform="translate(611.86,605) scale(1,1.04)" text-anchor="middle" fill="#000a64" font-size="13">G</text>
<text transform="translate(672.54,605) scale(1,1.04)" text-anchor="middle" fill="#000a64" font-size="13">A</text>
<text transform="translate(733.62,605) scale(1,1.04)" text-anchor="middle" fill="#000a64" font-size="13">A</text>
<text transform="translate(795.10,605) scale(1,1.04)" text-anchor="middle" fill="#000a64" font-size="13">G</text>
<text transform="translate(856.18,605) scale(1,1.04)" text-anchor="middle" fill="#000a64" font-size="13">T</text>
<text transform="translate(917.26,605) scale(1,1.04)" text-anchor="middle" fill="#000a64" font-size="13">G</text>
<text transform="translate(129.36,620) scale(1,1.04)" fill="#000a64" font-size="13" letter-spacing="-0.691" xml:space="preserve">Dog</text>
<text transform="translate(184.30,620) scale(1,1.04)" text-anchor="middle" fill="#8c8cb4" font-size="13">T</text>
<text transform="translate(245.38,620) scale(1,1.04)" text-anchor="middle" fill="#000a64" font-size="13">C</text>
<text transform="translate(306.46,620) scale(1,1.04)" text-anchor="middle" fill="#000a64" font-size="13">C</text>
<text transform="translate(367.54,620) scale(1,1.04)" text-anchor="middle" fill="#8c8cb4" font-size="13">C</text>
<text transform="translate(428.62,620) scale(1,1.04)" text-anchor="middle" fill="#000a64" font-size="13">C</text>
<text transform="translate(489.30,620) scale(1,1.04)" text-anchor="middle" fill="#000a64" font-size="13">A</text>
<text transform="translate(550.78,620) scale(1,1.04)" text-anchor="middle" fill="#000a64" font-size="13">G</text>
<text transform="translate(611.86,620) scale(1,1.04)" text-anchor="middle" fill="#000a64" font-size="13">G</text>
<text transform="translate(672.54,620) scale(1,1.04)" text-anchor="middle" fill="#000a64" font-size="13">A</text>
<text transform="translate(733.62,620) scale(1,1.04)" text-anchor="middle" fill="#000a64" font-size="13">A</text>
<text transform="translate(795.10,620) scale(1,1.04)" text-anchor="middle" fill="#000a64" font-size="13">G</text>
<text transform="translate(856.18,620) scale(1,1.04)" text-anchor="middle" fill="#000a64" font-size="13">T</text>
<text transform="translate(917.26,620) scale(1,1.04)" text-anchor="middle" fill="#000a64" font-size="13">G</text>
<text transform="translate(101.26,635) scale(1,1.04)" fill="#005a0a" font-size="13" letter-spacing="-0.138" xml:space="preserve">Elephant</text>
<text transform="translate(184.30,635) scale(1,1.04)" text-anchor="middle" fill="#000a64" font-size="13">C</text>
<text transform="translate(245.38,635) scale(1,1.04)" text-anchor="middle" fill="#000a64" font-size="13">C</text>
<text transform="translate(306.46,635) scale(1,1.04)" text-anchor="middle" fill="#000a64" font-size="13">C</text>
<text transform="translate(367.14,635) scale(1,1.04)" text-anchor="middle" fill="#000a64" font-size="13">A</text>
<text transform="translate(428.62,635) scale(1,1.04)" text-anchor="middle" fill="#000a64" font-size="13">C</text>
<text transform="translate(489.30,635) scale(1,1.04)" text-anchor="middle" fill="#000a64" font-size="13">A</text>
<text transform="translate(550.78,635) scale(1,1.04)" text-anchor="middle" fill="#000a64" font-size="13">G</text>
<text transform="translate(611.86,635) scale(1,1.04)" text-anchor="middle" fill="#000a64" font-size="13">G</text>
<text transform="translate(672.54,635) scale(1,1.04)" text-anchor="middle" fill="#000a64" font-size="13">A</text>
<text transform="translate(733.62,635) scale(1,1.04)" text-anchor="middle" fill="#000a64" font-size="13">A</text>
<text transform="translate(795.10,635) scale(1,1.04)" text-anchor="middle" fill="#000a64" font-size="13">G</text>
<text transform="translate(856.18,635) scale(1,1.04)" text-anchor="middle" fill="#000a64" font-size="13">T</text>
<text transform="translate(917.26,635) scale(1,1.04)" text-anchor="middle" fill="#000a64" font-size="13">G</text>
<text transform="translate(105.05,650) scale(1,1.04)" fill="#005a0a" font-size="13" letter-spacing="0.008" xml:space="preserve">Chicken</text>
<text transform="translate(184.30,651.1) scale(1,1.04)" text-anchor="middle" fill="#8c8cb4" font-size="13">=</text>
<text transform="translate(245.38,651.1) scale(1,1.04)" text-anchor="middle" fill="#8c8cb4" font-size="13">=</text>
<text transform="translate(306.46,651.1) scale(1,1.04)" text-anchor="middle" fill="#8c8cb4" font-size="13">=</text>
<text transform="translate(367.54,651.1) scale(1,1.04)" text-anchor="middle" fill="#8c8cb4" font-size="13">=</text>
<text transform="translate(428.62,651.1) scale(1,1.04)" text-anchor="middle" fill="#8c8cb4" font-size="13">=</text>
<text transform="translate(489.70,651.1) scale(1,1.04)" text-anchor="middle" fill="#8c8cb4" font-size="13">=</text>
<text transform="translate(550.78,651.1) scale(1,1.04)" text-anchor="middle" fill="#8c8cb4" font-size="13">=</text>
<text transform="translate(611.86,651.1) scale(1,1.04)" text-anchor="middle" fill="#8c8cb4" font-size="13">=</text>
<text transform="translate(672.94,651.1) scale(1,1.04)" text-anchor="middle" fill="#8c8cb4" font-size="13">=</text>
<text transform="translate(734.02,651.1) scale(1,1.04)" text-anchor="middle" fill="#8c8cb4" font-size="13">=</text>
<text transform="translate(795.10,651.1) scale(1,1.04)" text-anchor="middle" fill="#8c8cb4" font-size="13">=</text>
<text transform="translate(856.18,651.1) scale(1,1.04)" text-anchor="middle" fill="#8c8cb4" font-size="13">=</text>
<text transform="translate(917.26,651.1) scale(1,1.04)" text-anchor="middle" fill="#8c8cb4" font-size="13">=</text>
<text transform="translate(84.16,665) scale(1,1.04)" fill="#000a64" font-size="13" letter-spacing="0.018" xml:space="preserve">X_tropicalis</text>
<text transform="translate(184.30,666.1) scale(1,1.04)" text-anchor="middle" fill="#8c8cb4" font-size="13">=</text>
<text transform="translate(245.38,666.1) scale(1,1.04)" text-anchor="middle" fill="#8c8cb4" font-size="13">=</text>
<text transform="translate(306.46,666.1) scale(1,1.04)" text-anchor="middle" fill="#8c8cb4" font-size="13">=</text>
<text transform="translate(367.54,666.1) scale(1,1.04)" text-anchor="middle" fill="#8c8cb4" font-size="13">=</text>
<text transform="translate(428.62,666.1) scale(1,1.04)" text-anchor="middle" fill="#8c8cb4" font-size="13">=</text>
<text transform="translate(489.70,666.1) scale(1,1.04)" text-anchor="middle" fill="#8c8cb4" font-size="13">=</text>
<text transform="translate(550.78,666.1) scale(1,1.04)" text-anchor="middle" fill="#8c8cb4" font-size="13">=</text>
<text transform="translate(611.86,666.1) scale(1,1.04)" text-anchor="middle" fill="#8c8cb4" font-size="13">=</text>
<text transform="translate(672.94,666.1) scale(1,1.04)" text-anchor="middle" fill="#8c8cb4" font-size="13">=</text>
<text transform="translate(734.02,666.1) scale(1,1.04)" text-anchor="middle" fill="#8c8cb4" font-size="13">=</text>
<text transform="translate(795.10,666.1) scale(1,1.04)" text-anchor="middle" fill="#8c8cb4" font-size="13">=</text>
<text transform="translate(856.18,666.1) scale(1,1.04)" text-anchor="middle" fill="#8c8cb4" font-size="13">=</text>
<text transform="translate(917.26,666.1) scale(1,1.04)" text-anchor="middle" fill="#8c8cb4" font-size="13">=</text>
<text transform="translate(97.99,680) scale(1,1.04)" fill="#005a0a" font-size="13" letter-spacing="-0.010" xml:space="preserve">Zebrafish</text>
<text transform="translate(184.30,681.1) scale(1,1.04)" text-anchor="middle" fill="#8c8cb4" font-size="13">=</text>
<text transform="translate(245.38,681.1) scale(1,1.04)" text-anchor="middle" fill="#8c8cb4" font-size="13">=</text>
<text transform="translate(306.46,681.1) scale(1,1.04)" text-anchor="middle" fill="#8c8cb4" font-size="13">=</text>
<text transform="translate(367.54,681.1) scale(1,1.04)" text-anchor="middle" fill="#8c8cb4" font-size="13">=</text>
<text transform="translate(428.62,681.1) scale(1,1.04)" text-anchor="middle" fill="#8c8cb4" font-size="13">=</text>
<text transform="translate(489.70,681.1) scale(1,1.04)" text-anchor="middle" fill="#8c8cb4" font-size="13">=</text>
<text transform="translate(550.78,681.1) scale(1,1.04)" text-anchor="middle" fill="#8c8cb4" font-size="13">=</text>
<text transform="translate(611.86,681.1) scale(1,1.04)" text-anchor="middle" fill="#8c8cb4" font-size="13">=</text>
<text transform="translate(672.94,681.1) scale(1,1.04)" text-anchor="middle" fill="#8c8cb4" font-size="13">=</text>
<text transform="translate(734.02,681.1) scale(1,1.04)" text-anchor="middle" fill="#8c8cb4" font-size="13">=</text>
<text transform="translate(795.10,681.1) scale(1,1.04)" text-anchor="middle" fill="#8c8cb4" font-size="13">=</text>
<text transform="translate(856.18,681.1) scale(1,1.04)" text-anchor="middle" fill="#8c8cb4" font-size="13">=</text>
<text transform="translate(917.26,681.1) scale(1,1.04)" text-anchor="middle" fill="#8c8cb4" font-size="13">=</text>
<text transform="translate(441.16,696) scale(1,1.04)" fill="#000" font-size="13" letter-spacing="-0.001" xml:space="preserve">Repeating Elements by RepeatMasker</text>
<text transform="translate(68.46,710) scale(1,1.04)" fill="#000" font-size="13" letter-spacing="-0.076" xml:space="preserve">RepeatMasker</text>
</svg>
</body></html>
